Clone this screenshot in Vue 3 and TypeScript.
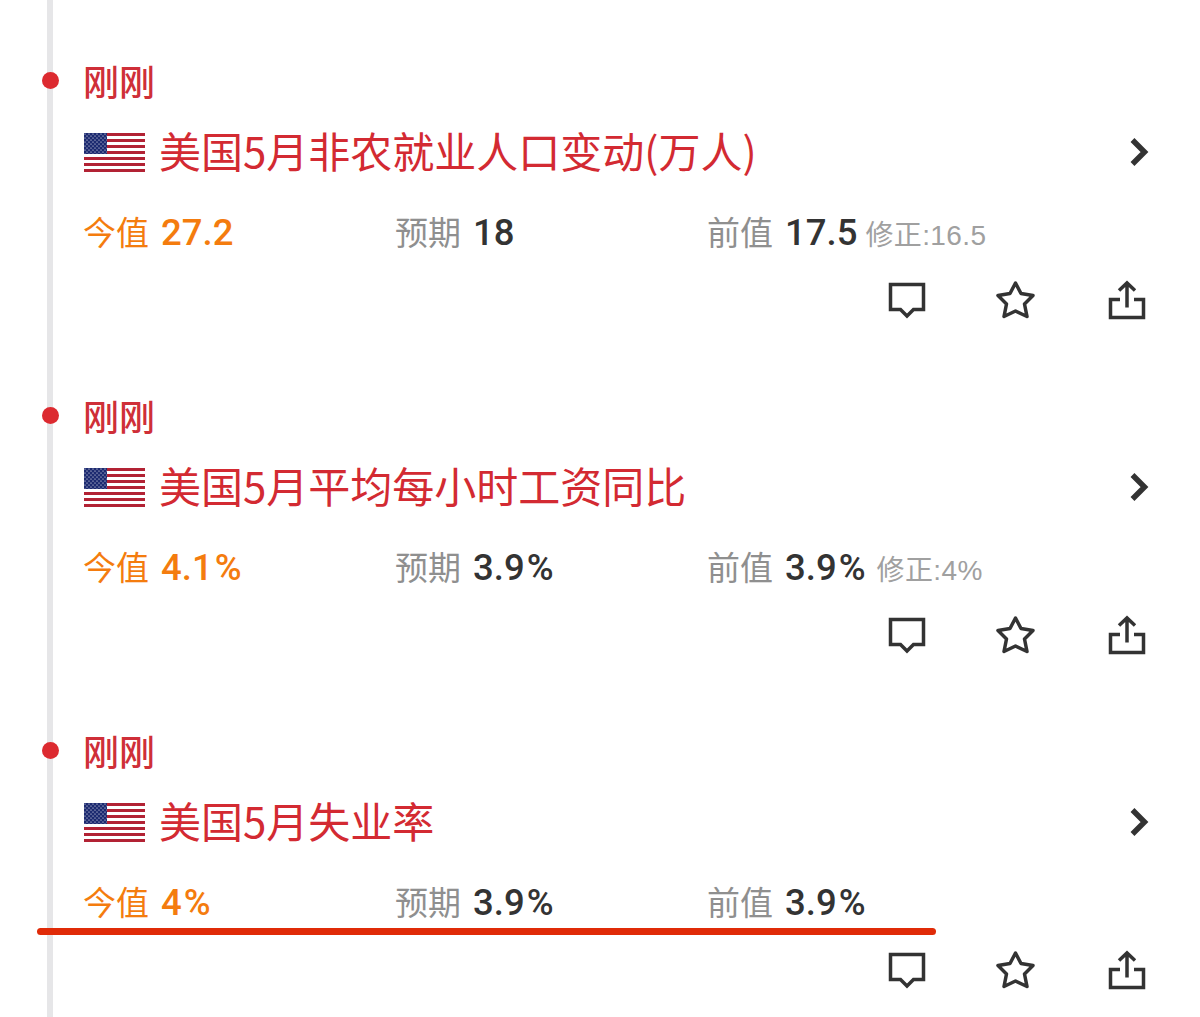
<script setup lang="ts">
interface NewsItem {
  title: string
  today: string
  forecast: string
  previous: string
  revised?: string
}

const items: NewsItem[] = [
  { title: '美国5月非农就业人口变动(万人)', today: '27.2', forecast: '18', previous: '17.5', revised: '16.5' },
  { title: '美国5月平均每小时工资同比', today: '4.1%', forecast: '3.9%', previous: '3.9%', revised: '4%' },
  { title: '美国5月失业率', today: '4%', forecast: '3.9%', previous: '3.9%' },
]

// red stripes of the flag, every other one of 13
const stripes = [0, 2, 4, 6, 8, 10, 12]

const digits = (v: string) => v.replace('%', '')
const isPercent = (v: string) => v.endsWith('%')
</script>

<template>
  <div class="page">
    <div class="timeline">
      <div v-for="(item, i) in items" :key="i" class="item">
        <span class="dot"></span>
        <div class="time">刚刚</div>
        <div class="title-row">
          <svg class="flag" viewBox="0 0 61 39" width="61" height="39">
            <defs>
              <pattern id="stars" width="4" height="4" patternUnits="userSpaceOnUse">
                <circle cx="1" cy="1" r="0.6" fill="#fff" />
                <circle cx="3" cy="3" r="0.6" fill="#fff" />
              </pattern>
            </defs>
            <rect width="61" height="39" fill="#fff" />
            <rect v-for="s in stripes" :key="s" x="0" :y="s * 3" width="61" height="3" fill="#b22234" />
            <rect width="23" height="21" fill="#1c2a70" />
            <rect width="23" height="21" fill="url(#stars)" />
          </svg>
          <span class="title">{{ item.title }}</span>
          <svg class="chevron" viewBox="0 0 20 32" width="20" height="32">
            <path d="M5.5 4L17.5 16L5.5 28" fill="none" stroke="#333" stroke-width="5.5" />
          </svg>
        </div>
        <div class="stats">
          <div class="stat today">今值<b>{{ digits(item.today) }}<i v-if="isPercent(item.today)">%</i></b></div>
          <div class="stat">预期<b>{{ digits(item.forecast) }}<i v-if="isPercent(item.forecast)">%</i></b></div>
          <div class="stat">
            前值<b>{{ digits(item.previous) }}<i v-if="isPercent(item.previous)">%</i></b>
            <small v-if="item.revised">修正:{{ item.revised }}</small>
          </div>
        </div>
        <div class="actions">
          <svg viewBox="0 0 40 40" width="40" height="40">
            <path d="M3.5 4.5H36.5V29.5H26.5L20 36L13.5 29.5H3.5Z" />
          </svg>
          <svg class="star" viewBox="0 0 40 40" width="40" height="40">
            <path d="M20.5 3L26 13.5L38 15.5L29.5 24L32 36.5L20.5 31L9 36.5L11.5 24L3 15.5L15 13.5Z" />
          </svg>
          <svg viewBox="0 0 40 40" width="40" height="40">
            <path d="M13 19.5H3.5V37.5H36.5V19.5H27M20 27.5V3M12 10.5L20 3L28 10.5" />
          </svg>
        </div>
      </div>
    </div>
    <div class="marker"></div>
  </div>
</template>

<style>
html,
body {
  background: #fff;
}
</style>

<style scoped>
.page {
  position: relative;
  height: 1017px;
  overflow: hidden;
  padding-left: 47px;
  box-sizing: border-box;
  font-family: "Noto Sans CJK SC", "Noto Sans", sans-serif;
}

.timeline {
  border-left: 6px solid #e6e6e8;
  padding-left: 31px;
  height: 100%;
}

.item {
  position: relative;
  padding: 58px 53px 15px 0;
}

.dot {
  position: absolute;
  left: -42px;
  top: 72px;
  width: 17px;
  height: 17px;
  border-radius: 50%;
  background: #dc2a30;
}

.time {
  font-size: 36px;
  line-height: 44px;
  font-weight: 500;
  color: #cf2f38;
  margin-left: -1px;
}

.title-row {
  display: flex;
  align-items: center;
  margin-top: 22px;
  height: 56px;
}

.flag {
  flex: none;
  margin-right: 15px;
}

.title {
  flex: 1;
  font-size: 42px;
  line-height: 56px;
  color: #d32a32;
  white-space: nowrap;
  transform: translateY(-2px);
  margin-left: -1px;
}

.chevron {
  flex: none;
  overflow: visible;
}

.stats {
  display: grid;
  grid-template-columns: 312px 312px 1fr;
  margin-top: 29px;
  height: 44px;
}

.stat {
  font-size: 33px;
  line-height: 44px;
  color: #8f8f8f;
  white-space: nowrap;
  margin-left: -1px;
}

.stat b {
  font-family: Roboto, sans-serif;
  font-size: 36.5px;
  font-weight: 500;
  color: #333;
  margin-left: 12px;
}

.stat b i {
  font-style: normal;
  margin-left: 2px;
  letter-spacing: 3px;
}

.stat small {
  font-size: 28px;
  letter-spacing: 0.4px;
  color: #a0a0a0;
  margin-left: 8px;
  font-family: "Liberation Sans", "Noto Sans CJK SC", sans-serif;
}

.today,
.today b {
  color: #f47c0e;
}

.actions {
  display: flex;
  justify-content: flex-end;
  gap: 70px;
  margin-top: 27px;
  height: 40px;
}

.actions svg {
  flex: none;
  fill: none;
  stroke: #333;
  stroke-width: 3.5;
}

.actions .star {
  stroke-linejoin: round;
  transform: translateX(-2px);
}

.marker {
  position: absolute;
  left: 37px;
  top: 928px;
  width: 899px;
  height: 7px;
  border-radius: 4px;
  background: #e02b08;
}
</style>
